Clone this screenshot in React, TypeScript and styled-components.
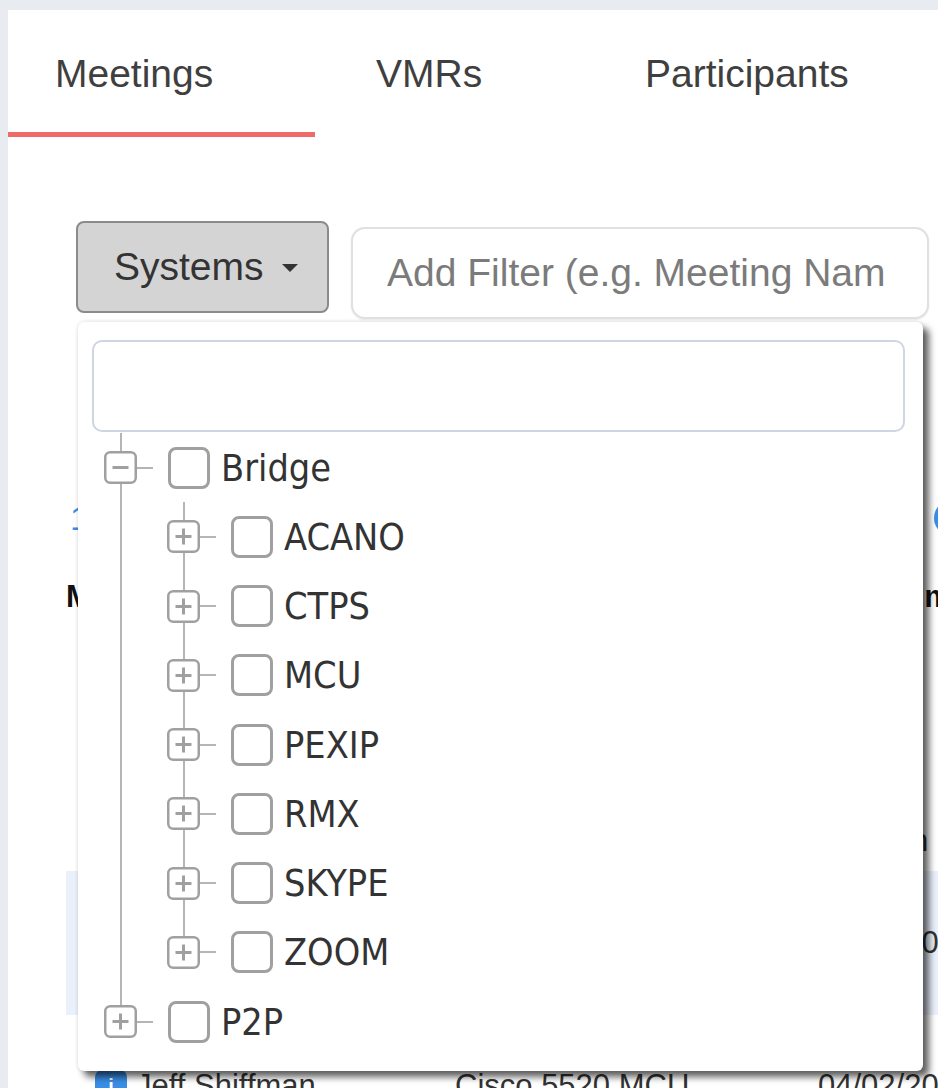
import React from "react";
import styled, { createGlobalStyle } from "styled-components";

type TreeNode = { label: string; open?: boolean; children?: TreeNode[] };

const tree: TreeNode[] = [
  {
    label: "Bridge",
    open: true,
    children: [
      { label: "ACANO" },
      { label: "CTPS" },
      { label: "MCU" },
      { label: "PEXIP" },
      { label: "RMX" },
      { label: "SKYPE" },
      { label: "ZOOM" },
    ],
  },
  { label: "P2P" },
];

const rows = [
  { h: 60, name: "Weekly Sync", system: "ACANO", time: "Ended" },
  { h: 60, name: "Board Review", system: "PEXIP", time: "Ended" },
  { h: 60, name: "Sales Standup", system: "ZOOM", time: "Ended" },
  { h: 61, name: "Product Demo", system: "RMX 2000", time: "In 5 min" },
  { h: 144, name: "Ops Briefing", system: "Cisco 5520 MCU", time: "04/02/2019", hl: true },
  { h: 142, name: "Jeff Shiffman", system: "Cisco 5520 MCU", time: "04/02/2019" },
];

const Toggle: React.FC<{ open?: boolean }> = ({ open }) => (
  <ToggleBox width="33" height="33" viewBox="0 0 33 33">
    <rect x="1.25" y="1.25" width="30.5" height="30.5" rx="5" fill="#fff" stroke="#a0a0a0" strokeWidth="2.5" />
    <line x1="8.5" y1="16.5" x2="24.5" y2="16.5" stroke="#a0a0a0" strokeWidth="3" />
    {!open && <line x1="16.5" y1="8.5" x2="16.5" y2="24.5" stroke="#a0a0a0" strokeWidth="3" />}
  </ToggleBox>
);

const TreeBranch: React.FC<{ nodes: TreeNode[]; nested?: boolean }> = ({ nodes, nested }) => (
  <TreeList $nested={nested}>
    {nodes.map((n) => (
      <li key={n.label}>
        <TreeRow>
          <Toggle open={n.open} />
          <Connector />
          <Check />
          <NodeLabel>{n.label}</NodeLabel>
        </TreeRow>
        {n.open && n.children && <TreeBranch nodes={n.children} nested />}
      </li>
    ))}
  </TreeList>
);

export default function App() {
  return (
    <>
      <GlobalStyle />
      <Page>
        <Panel>
          <Tabs>
            <Tab $active $pad={47}>Meetings</Tab>
            <Tab $pad={61}>VMRs</Tab>
            <Tab $pad={61}>Participants</Tab>
          </Tabs>

          <Toolbar>
            <SystemsButton>
              Systems <Caret />
            </SystemsButton>
            <FilterInput placeholder="Add Filter (e.g. Meeting Nam" />

            <Dropdown>
              <SearchBox />
              <TreeWrap>
                <TreeBranch nodes={tree} />
              </TreeWrap>
            </Dropdown>
          </Toolbar>

          <Content>
            <CountRow>
              <CountText>1 - 10 of 10 Meetings</CountText>
              <RoundButton />
            </CountRow>
            <HeaderRow>
              <span>Meeting Name</span>
              <span>System</span>
              <span>Start Time</span>
            </HeaderRow>
            {rows.map((r) => (
              <TableRow key={r.name} $h={r.h} $hl={r.hl}>
                <NameCell>
                  <UserBadge>i</UserBadge>
                  {r.name}
                </NameCell>
                <span>{r.system}</span>
                <span>{r.time}</span>
              </TableRow>
            ))}
          </Content>
        </Panel>
      </Page>
    </>
  );
}

const GlobalStyle = createGlobalStyle`
  html, body {
    margin: 0;
    padding: 0;
    background: #e8ebf0;
    overflow: hidden;
  }
  body {
    font-family: "Liberation Sans", Arial, sans-serif;
  }
  * {
    box-sizing: border-box;
  }
`;

const Page = styled.div`
  height: 1088px;
  padding: 10px 0 0 8px;
`;

const Panel = styled.div`
  height: 100%;
  background: #fff;
  overflow: hidden;
`;

const Tabs = styled.nav`
  display: grid;
  grid-template-columns: 307px 269px 1fr;
`;

const Tab = styled.div<{ $active?: boolean; $pad: number }>`
  height: 127px;
  display: flex;
  align-items: center;
  padding: 6px 0 0 ${(p) => p.$pad}px;
  font-size: 39px;
  color: #3f3f3f;
  border-bottom: 5px solid ${(p) => (p.$active ? "#ef6b67" : "transparent")};
`;

const Toolbar = styled.div`
  position: relative;
  display: flex;
  align-items: flex-start;
  gap: 22px;
  margin: 84px 0 0 68px;
`;

const SystemsButton = styled.button`
  width: 253px;
  height: 92px;
  display: flex;
  align-items: center;
  gap: 18px;
  padding: 0 0 0 36px;
  background: #d4d4d4;
  border: 2px solid #8b8b8b;
  border-radius: 8px;
  font: 39px "Liberation Sans", Arial, sans-serif;
  color: #333;
`;

const Caret = styled.span`
  width: 0;
  height: 0;
  margin-top: 2px;
  border-left: 8px solid transparent;
  border-right: 8px solid transparent;
  border-top: 8px solid #333;
`;

const FilterInput = styled.input`
  width: 578px;
  height: 92px;
  margin-top: 6px;
  padding: 0 0 0 34px;
  border: 2px solid #e0e0e0;
  border-radius: 14px;
  box-shadow: 0 1px 2px rgba(0, 0, 0, 0.08);
  font: 39px "Liberation Sans", Arial, sans-serif;
  color: #333;
  outline: none;

  &::placeholder {
    color: #7b7b7b;
  }
`;

const Dropdown = styled.div`
  position: absolute;
  top: 101px;
  left: 2px;
  z-index: 5;
  width: 845px;
  padding: 18px 18px 15px 14px;
  background: #fff;
  border-radius: 6px;
  box-shadow: 0 0 4px rgba(0, 0, 0, 0.14), 6px 6px 7px rgba(0, 0, 0, 0.62);
`;

const SearchBox = styled.div`
  height: 92px;
  border: 2px solid #cfd6e1;
  border-radius: 10px;
`;

const TreeWrap = styled.div`
  margin: 1px 0 0 12px;
`;

const TreeList = styled.ul<{ $nested?: boolean }>`
  position: relative;
  list-style: none;
  margin: 0 0 0 ${(p) => (p.$nested ? 63 : 0)}px;
  padding: 0;

  &::before {
    content: "";
    position: absolute;
    left: 15.5px;
    top: 0;
    bottom: 34.6px;
    width: 2px;
    background: #b5b5b5;
  }
`;

const TreeRow = styled.div`
  position: relative;
  height: 69.25px;
  display: flex;
  align-items: center;
`;

const ToggleBox = styled.svg`
  position: relative;
  flex: none;
  display: block;
`;

const Connector = styled.span`
  width: 16px;
  height: 2px;
  flex: none;
  background: #b5b5b5;
`;

const Check = styled.span`
  width: 42px;
  height: 42px;
  flex: none;
  margin-left: 15px;
  border: 3px solid #a0a0a0;
  border-radius: 8px;
  background: #fff;
`;

const NodeLabel = styled.span`
  margin-left: 11px;
  font-family: "Liberation Sans Narrow", "DejaVu Sans Condensed", "Liberation Sans", sans-serif;
  font-size: 37.5px;
  color: #333;
`;

const Content = styled.section`
  width: 900px;
  margin: 171px 0 0 58px;
`;

const CountRow = styled.div`
  height: 56px;
  display: flex;
  align-items: center;
  justify-content: space-between;
`;

const CountText = styled.span`
  padding-left: 4px;
  font-size: 34px;
  color: #3a8ee6;
`;

const RoundButton = styled.span`
  width: 36px;
  height: 36px;
  margin-right: -4px;
  border-radius: 50%;
  background: #3a8ee6;
`;

const HeaderRow = styled.div`
  height: 66px;
  margin-top: 18px;
  display: grid;
  grid-template-columns: 389px 363px 1fr;
  align-items: center;
  font-size: 31px;
  font-weight: bold;
  color: #111;
  white-space: nowrap;
`;

const TableRow = styled.div<{ $h: number; $hl?: boolean }>`
  height: ${(p) => p.$h}px;
  display: grid;
  grid-template-columns: 389px 363px 1fr;
  align-items: center;
  background: ${(p) => (p.$hl ? "#eaf1fb" : "transparent")};
  font-size: 31px;
  color: #333;
  white-space: nowrap;
`;

const NameCell = styled.span`
  display: flex;
  align-items: center;
  gap: 9px;
  padding-left: 29px;
`;

const UserBadge = styled.span`
  width: 32px;
  height: 32px;
  display: flex;
  align-items: center;
  justify-content: center;
  border-radius: 7px;
  background: #3a8ee6;
  color: #fff;
  font-size: 20px;
  font-weight: bold;
`;
